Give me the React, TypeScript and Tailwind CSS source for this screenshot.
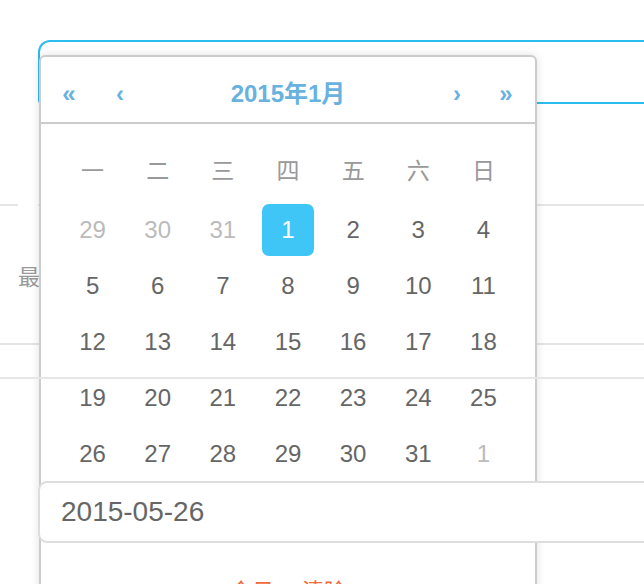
import React from 'react';

const WEEKDAYS = ['一', '二', '三', '四', '五', '六', '日'];

type Day = { n: number; muted?: boolean; selected?: boolean };

const weeks: Day[][] = [
    [{ n: 29, muted: true }, { n: 30, muted: true }, { n: 31, muted: true }, { n: 1, selected: true }, { n: 2 }, { n: 3 }, { n: 4 }],
    [5, 6, 7, 8, 9, 10, 11].map((n) => ({ n })),
    [12, 13, 14, 15, 16, 17, 18].map((n) => ({ n })),
    [19, 20, 21, 22, 23, 24, 25].map((n) => ({ n })),
    [{ n: 26 }, { n: 27 }, { n: 28 }, { n: 29 }, { n: 30 }, { n: 31 }, { n: 1, muted: true }],
];

const sans = "font-['Liberation_Sans','Noto_Sans_CJK_SC',sans-serif]";

function Calendar() {
    return (
        <div className="absolute left-[39px] top-[55px] w-[498px] h-[560px] rounded-[6px] border-2 border-[#cccccc] bg-white shadow-[0_0_10px_rgba(0,0,0,0.12)]">
            <div className="flex h-[65px] items-center pt-[9px] text-[24px] font-bold text-[#68b2e0]">
                <span className="w-[48px] text-center pl-[8px]">«</span>
                <span className="w-[48px] text-center pl-[14px]">‹</span>
                <span className="flex-1 text-center">2015年1月</span>
                <span className="w-[48px] text-center pr-[12px]">›</span>
                <span className="w-[48px] text-center pr-[10px]">»</span>
            </div>
            <div className="h-[2px] bg-[#cccccc]" />
            <div className="px-[19px] pt-[21px]">
                <div className="grid h-[52px] grid-cols-7 items-center text-center text-[23px] text-[#999999]">
                    {WEEKDAYS.map((d) => (
                        <span key={d}>{d}</span>
                    ))}
                </div>
                <div className="mt-[5px]">
                    {weeks.map((week, i) => (
                        <div key={i} className="grid h-[56px] grid-cols-7 items-center">
                            {week.map((day, j) => (
                                <div key={j} className="flex justify-center">
                                    <div
                                        className={
                                            day.selected
                                                ? 'flex h-[52px] w-[52px] items-center justify-center rounded-[7px] bg-[#40c6f6] text-[24px] text-white'
                                                : day.muted
                                                  ? 'flex h-[52px] w-[52px] items-center justify-center text-[24px] text-[#bbbbbb]'
                                                  : 'flex h-[52px] w-[52px] items-center justify-center text-[24px] text-[#666666]'
                                        }
                                    >
                                        {day.n}
                                    </div>
                                </div>
                            ))}
                        </div>
                    ))}
                </div>
            </div>
            <div className="mt-[93px] flex justify-center gap-[28px] text-[22px] text-[#f26a3a]">
                <span>今日</span>
                <span>清除</span>
            </div>
        </div>
    );
}

export default function App() {
    return (
        <div className={`relative h-[584px] w-[644px] overflow-hidden bg-white ${sans}`}>
            <div className="pt-[40px]">
                <div className="ml-[38px] h-[64px] rounded-tl-[12px] rounded-bl-[4px] border-2 border-r-0 border-[#2cbdef]" />
            </div>
            <div className="mt-[100px] flex">
                <div className="h-[2px] w-[18px] bg-[#e5e5e5]" />
                <div className="w-[20px]" />
                <div className="h-[2px] flex-1 bg-[#e5e5e5]" />
            </div>
            <div className="flex h-[137px] items-center pl-[18px] text-[22px] text-[#999999]">
                <span className="mt-[6px]">最</span>
            </div>
            <div className="h-[2px] bg-[#e5e5e5]" />

            <Calendar />

            <div className="absolute left-0 top-[377px] h-[2px] w-full bg-[#e6e6e6]" />

            <div className="absolute left-[38px] top-[481px] flex h-[62px] w-[700px] items-center rounded-[9px] border-2 border-[#dddddd] bg-white pl-[21px] text-[28px] text-[#666666]">
                2015-05-26
            </div>
        </div>
    );
}
